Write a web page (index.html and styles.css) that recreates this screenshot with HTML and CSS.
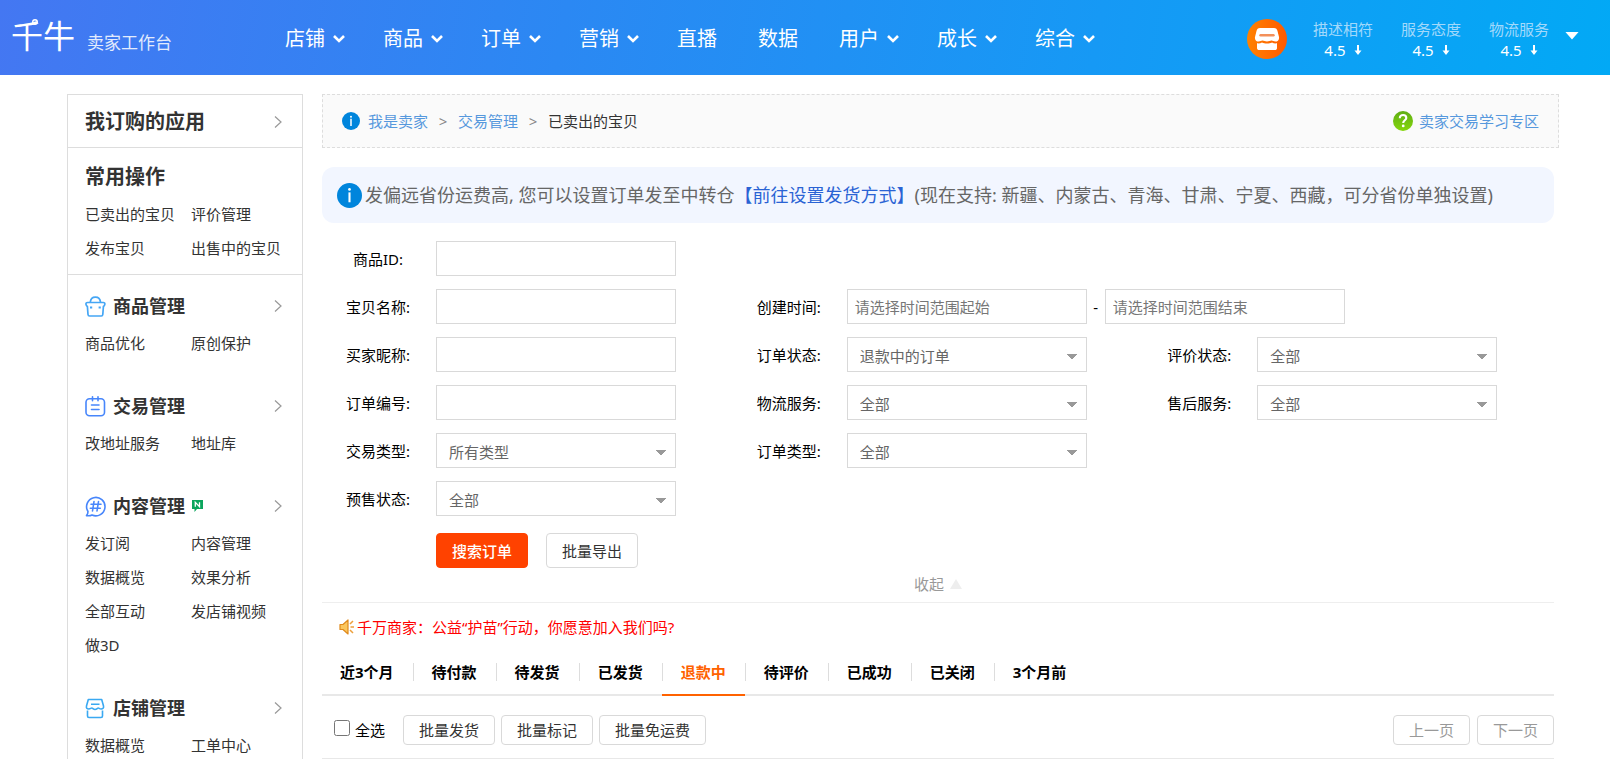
FILE: index.html
```html
<!DOCTYPE html>
<html lang="zh-CN">
<head>
<meta charset="utf-8">
<title>已卖出的宝贝</title>
<link rel="stylesheet" href="styles.css">
</head>
<body>
<svg class="defs" aria-hidden="true">
  <symbol id="chev-down" viewBox="0 0 12 10"><path d="M1 2l5 5 5-5" fill="none" stroke="currentColor" stroke-width="2.600"/></symbol>
  <symbol id="chev-right" viewBox="0 0 8 14"><path d="M1 1.500l6 5.500-6 5.500" fill="none" stroke="currentColor" stroke-width="1.200"/></symbol>
  <symbol id="arrow-down" viewBox="0 0 8 12"><path d="M4 1v8" stroke="currentColor" stroke-width="2"/><path d="M.5 6.500L4 11l3.500-4.500z" fill="currentColor"/></symbol>
  <symbol id="info" viewBox="0 0 24 24"><circle cx="12" cy="12" r="12" fill="#0085dc"/><path d="M12 9v9.500" stroke="#fff" stroke-width="2"/><circle cx="12" cy="6.200" r="1.300" fill="#fff"/></symbol>
</svg>
<header class="top">
  <div class="brand">
    <span class="logo">千牛<svg class="ring" viewBox="0 0 8 8"><circle cx="4" cy="4" r="2.300" fill="none" stroke="#fff" stroke-width="1.400"/></svg></span>
    <span class="brand-sub">卖家工作台</span>
  </div>
  <nav class="nav">
    <a href="#">店铺<svg><use href="#chev-down"/></svg></a>
    <a href="#">商品<svg><use href="#chev-down"/></svg></a>
    <a href="#">订单<svg><use href="#chev-down"/></svg></a>
    <a href="#">营销<svg><use href="#chev-down"/></svg></a>
    <a href="#" class="plain">直播</a>
    <a href="#" class="plain">数据</a>
    <a href="#">用户<svg><use href="#chev-down"/></svg></a>
    <a href="#">成长<svg><use href="#chev-down"/></svg></a>
    <a href="#">综合<svg><use href="#chev-down"/></svg></a>
  </nav>
  <div class="account">
    <svg class="shop" viewBox="0 0 40 40">
      <defs><linearGradient id="og"><stop offset="0" stop-color="#ff8200"/><stop offset="1" stop-color="#ff5a00"/></linearGradient></defs>
      <circle cx="20" cy="20" r="20" fill="url(#og)"/>
      <path d="M13 9h14c2 0 3 1 3.500 3l1.500 6c.5 3-1.500 4.500-3.500 4.500-2 0-2.500-1-4-1s-2.500 1-4.500 1-3-1-4.500-1-2 1-4 1S7.500 21 8 18l1.500-6C10 10 11 9 13 9z" fill="#fff"/>
      <path d="M13.500 16.300h13" stroke="#f3905a" stroke-width="2.400" stroke-linecap="round"/>
      <path d="M10 24.300c2 .4 3.500 0 5-.8 1.500.8 3 1 5 1s3.500-.2 5-1c1.500.8 3 1.200 5 .8V29c0 1.500-1 2-2 2H12c-1 0-2-.5-2-2z" fill="#fff"/>
    </svg>
    <dl class="stat"><dt>描述相符</dt><dd>4.5<svg><use href="#arrow-down"/></svg></dd></dl>
    <dl class="stat"><dt>服务态度</dt><dd>4.5<svg><use href="#arrow-down"/></svg></dd></dl>
    <dl class="stat"><dt>物流服务</dt><dd>4.5<svg><use href="#arrow-down"/></svg></dd></dl>
    <button class="more" type="button" aria-label="更多"></button>
  </div>
</header>

<div class="page">
  <aside class="side">
    <section class="apps"><h2>我订购的应用</h2><svg class="go"><use href="#chev-right"/></svg></section>
    <section class="common">
      <h2>常用操作</h2>
      <div class="links"><a href="#">已卖出的宝贝</a><a href="#">评价管理</a><a href="#">发布宝贝</a><a href="#">出售中的宝贝</a></div>
    </section>
    <div class="groups">
      <section>
        <h3><svg class="ico" viewBox="0 0 21 21" fill="none" stroke="#45a6f5" stroke-width="1.700" stroke-linejoin="round"><path d="M2.500 6.500h15.800c1.200 0 1.700.8 1.500 1.800-.2 1.200-.9 1.800-1.400 2.200l-.6 8c-.1 1-.7 1.500-1.500 1.500H4.500c-.8 0-1.400-.5-1.500-1.500l-.6-8C1.800 10 1.200 9.400 1 8.300c-.2-1 .3-1.800 1.500-1.800z"/><path d="M5.300 6.200C5.600 3 7.700 1.200 10.400 1.200s4.800 1.800 5.100 5"/><path d="M5 11.500h2.200M13.600 11.500h2.200" stroke-width="2.200"/></svg>商品管理<svg class="go"><use href="#chev-right"/></svg></h3>
        <div class="links"><a href="#">商品优化</a><a href="#">原创保护</a></div>
      </section>
      <section>
        <h3><svg class="ico" viewBox="0 0 21 21" fill="none" stroke="#4786fb" stroke-width="1.600" stroke-linecap="round"><rect x="1" y="2.800" width="18.500" height="17" rx="3.500"/><path d="M7.500.8v4M13 .8v4M6.500 9h7.500M6.500 13.500h7.500"/></svg>交易管理<svg class="go"><use href="#chev-right"/></svg></h3>
        <div class="links"><a href="#">改地址服务</a><a href="#">地址库</a></div>
      </section>
      <section>
        <h3><svg class="ico" viewBox="0 0 21 21" fill="none" stroke="#4786fb" stroke-width="1.600" stroke-linecap="round" stroke-linejoin="round"><path d="M3 15.500a9.200 9.200 0 1 1 4 3.500c-1.500.8-3.500.9-5.500.6C2.500 18.500 3 17 3 15.500z"/><path d="M9 5.500L7.500 15M13.500 5.500L12 15M6 8.200h10M5.300 12.300h10"/></svg>内容管理<svg class="new" viewBox="0 0 11 12"><path d="M0 0h11v9H5l-2.500 3V9H0z" fill="#0ba55d"/><path d="M3.300 6.800V2.400l4.200 4.200V2.200" fill="none" stroke="#fff" stroke-width="1.300"/></svg><svg class="go"><use href="#chev-right"/></svg></h3>
        <div class="links"><a href="#">发订阅</a><a href="#">内容管理</a><a href="#">数据概览</a><a href="#">效果分析</a><a href="#">全部互动</a><a href="#">发店铺视频</a><a href="#">做3D</a></div>
      </section>
      <section>
        <h3><svg class="ico" viewBox="0 0 21 21" fill="none" stroke="#3aa9f2" stroke-width="1.600" stroke-linejoin="round"><path d="M3.300 1.500h13.400l1.800 6.500c.5 2-.8 3-2.300 3-1.700 0-2.200-1-3-1s-1.500 1.500-3.200 1.500S7.800 10 6.800 10s-1.300 1-3 1C2 11 1 10 1.500 8z"/><path d="M6 6.200h8.500M2.500 12.500v5.500c0 1 .5 1.500 1.500 1.500h12c1 0 1.500-.5 1.500-1.500v-5.500"/></svg>店铺管理<svg class="go"><use href="#chev-right"/></svg></h3>
        <div class="links"><a href="#">数据概览</a><a href="#">工单中心</a></div>
      </section>
    </div>
  </aside>

  <main class="main">
    <div class="crumbs">
      <svg class="info-sm"><use href="#info"/></svg>
      <a href="#">我是卖家</a><i>&gt;</i><a href="#">交易管理</a><i>&gt;</i><span>已卖出的宝贝</span>
      <a href="#" class="learn"><svg viewBox="0 0 20 20"><defs><linearGradient id="gg" x2="0" y2="1"><stop offset="0" stop-color="#5fae14"/><stop offset="1" stop-color="#85d60c"/></linearGradient></defs><circle cx="10" cy="10" r="10" fill="url(#gg)"/><path d="M6.800 7.200c0-2 1.400-3.200 3.300-3.200s3.200 1.200 3.200 2.900c0 2.300-3.100 2.500-3.100 5" fill="none" stroke="#fff" stroke-width="2.100"/><circle cx="10.200" cy="14.900" r="1.400" fill="#fff"/></svg>卖家交易学习专区</a>
    </div>
    <div class="content">
      <div class="notice"><svg class="info-lg"><use href="#info"/></svg><p>发偏远省份运费高, 您可以设置订单发至中转仓<a href="#">【前往设置发货方式】</a>(现在支持: 新疆、内蒙古、青海、甘肃、宁夏、西藏，可分省份单独设置)</p></div>
      <form class="filter">
        <div class="grid">
          <div class="field full"><label for="f1">商品ID:</label><input id="f1" type="text"></div>
          <div class="field"><label for="f2">宝贝名称:</label><input id="f2" type="text"></div>
          <div class="field range"><label for="f3">创建时间:</label><input id="f3" type="text" placeholder="请选择时间范围起始"><span>-</span><input type="text" aria-label="结束时间" placeholder="请选择时间范围结束"></div>
          <div class="field"><label for="f4">买家昵称:</label><input id="f4" type="text"></div>
          <div class="field"><label for="f5">订单状态:</label><select id="f5"><option>退款中的订单</option></select></div>
          <div class="field"><label for="f6">评价状态:</label><select id="f6"><option>全部</option></select></div>
          <div class="field"><label for="f7">订单编号:</label><input id="f7" type="text"></div>
          <div class="field"><label for="f8">物流服务:</label><select id="f8"><option>全部</option></select></div>
          <div class="field"><label for="f9">售后服务:</label><select id="f9"><option>全部</option></select></div>
          <div class="field"><label for="f10">交易类型:</label><select id="f10"><option>所有类型</option></select></div>
          <div class="field"><label for="f11">订单类型:</label><select id="f11"><option>全部</option></select></div>
          <div class="field full"><label for="f12">预售状态:</label><select id="f12"><option>全部</option></select></div>
        </div>
        <div class="actions"><button type="button" class="btn primary">搜索订单</button><button type="button" class="btn">批量导出</button></div>
        <button type="button" class="fold">收起</button>
      </form>
      <p class="news"><svg viewBox="0 0 16 16"><path d="M1 5.500h3L9 1v14l-5-4.500H1z" fill="#fbc65c" stroke="#e08a1c" stroke-width="1.200" stroke-linejoin="round"/><path d="M11 5l3-3M11.500 8H15M11 11l3 3" stroke="#eda03c" stroke-width="1.500"/></svg><a href="#">千万商家：公益“护苗”行动，你愿意加入我们吗?</a></p>
      <nav class="tabs"><a href="#">近3个月</a><a href="#">待付款</a><a href="#">待发货</a><a href="#">已发货</a><a href="#" class="on">退款中</a><a href="#">待评价</a><a href="#">已成功</a><a href="#">已关闭</a><a href="#">3个月前</a></nav>
      <div class="batch">
        <label class="all"><input type="checkbox"><span>全选</span></label>
        <button type="button" class="btn sm">批量发货</button><button type="button" class="btn sm">批量标记</button><button type="button" class="btn sm">批量免运费</button>
        <div class="pager"><button type="button" class="btn sm">上一页</button><button type="button" class="btn sm">下一页</button></div>
      </div>
    </div>
  </main>
</div>
</body>
</html>
```
FILE: styles.css
```css
* { box-sizing: border-box; margin: 0; padding: 0; }
body {
  display: flex;
  flex-direction: column;
  height: 100vh;
  overflow: hidden;
  background: #fff;
  color: #333;
  font: 15px/20px "Noto Sans", "Noto Sans CJK SC", sans-serif;
}
a { color: inherit; text-decoration: none; }
button, input, select { font: inherit; color: inherit; }
svg { flex: none; }
.defs { display: none; }

/* Top bar */
.top {
  display: flex;
  align-items: center;
  flex: none;
  height: 75px;
  padding: 0 31px 0 11px;
  background: linear-gradient(100deg, #4477f2, #2b88f3 35%, #1699f5 68%, #02a9f5);
  color: #fff;
}
.brand { display: flex; width: 274px; align-items: center; gap: 12px; }
.logo { position: relative; font-size: 32px; line-height: 48px; padding-bottom: 4px; }
.ring { position: absolute; left: 20px; top: 6px; width: 8px; height: 8px; }
.brand-sub { font-size: 17px; padding-top: 10px; opacity: .85; }
.nav { display: flex; gap: 38px; padding-top: 2px; font-size: 20px; line-height: 28px; }
.nav a { display: flex; align-items: center; gap: 8px; }
.nav svg { width: 12px; height: 10px; }
.nav .plain { padding-right: 3px; }
.account { display: flex; align-items: center; margin-left: auto; }
.shop { width: 40px; height: 40px; margin-top: 2px; }
.stat { margin: 4px 0 0 28px; text-align: center; line-height: 21px; }
.shop + .stat { margin-left: 26px; }
.stat dt { color: #a2d9fb; }
.stat dd { display: flex; justify-content: center; align-items: center; gap: 8px; }
.stat svg { width: 8px; height: 12px; }
.more {
  width: 14px;
  height: 8px;
  margin: 0 0 4px 16px;
  border: 0;
  background: #fff;
  clip-path: polygon(0 0, 100% 0, 50% 100%);
}

.page { display: flex; flex: 1; align-items: flex-start; gap: 19px; padding: 19px 51px 0 67px; }

/* Sidebar */
.side { flex: none; width: 236px; border: 1px solid #ddd; }
.side h2 { font-size: 20px; line-height: 40px; }
.apps { display: flex; align-items: center; height: 53px; padding: 2px 20px 0 17px; border-bottom: 1px solid #ddd; }
.common { padding: 9px 0 9px 17px; border-bottom: 1px solid #ddd; }
.go { width: 8px; height: 14px; margin-left: auto; color: #999; }
.links { display: grid; grid-template-columns: 106px 1fr; line-height: 34px; }
.groups { display: flex; flex-direction: column; gap: 26px; padding: 11px 0 20px 17px; }
.side h3 { display: flex; align-items: center; height: 40px; padding-right: 20px; font-size: 18px; }
.ico { width: 21px; height: 21px; margin-right: 7px; }
.new { width: 11px; height: 12px; margin-left: 7px; }

/* Main column */
.main { flex: 1; min-width: 0; }
.crumbs {
  display: flex;
  align-items: center;
  height: 54px;
  padding: 0 19px;
  border: 1px dashed #ddd;
  background: #fafafa;
}
.crumbs a { color: #5698dd; }
.crumbs i { width: 30px; text-align: center; font-style: normal; color: #888; }
.info-sm { width: 18px; height: 18px; margin-right: 8px; }
.crumbs .learn { display: flex; align-items: center; gap: 6px; margin-left: auto; }
.learn svg { width: 20px; height: 20px; }
.content { margin-right: 5px; }
.notice {
  display: flex;
  align-items: center;
  gap: 3px;
  height: 56px;
  margin: 19px 0 18px;
  padding: 0 15px;
  border-radius: 12px;
  background: #f2f6ff;
  color: #666;
  font-size: 18px;
}
.notice a { color: #2a63d4; }
.info-lg { width: 25px; height: 25px; }

/* Filter form */
.filter { border-bottom: 1px solid #eee; }
.grid { display: grid; grid-template-columns: repeat(3, 1fr); row-gap: 13px; }
.field { display: flex; align-items: center; }
.full { grid-column: 1 / -1; }
.range { grid-column: span 2; }
.field label { width: 114px; padding-right: 2px; text-align: center; color: #000; }
.field input, .field select {
  width: 240px;
  height: 35px;
  padding: 0 7px;
  border: 1px solid #d9d9d9;
  border-radius: 0;
  background: #fff;
  color: #666;
}
.field input::placeholder { color: #777; }
.field span { width: 18px; text-align: center; color: #000; }
.field select {
  appearance: none;
  padding: 2px 12px 0;
  background: linear-gradient(to bottom right, #999 50%, transparent 50%) no-repeat right 9px top 16px / 5px 6px, linear-gradient(to bottom left, #999 50%, transparent 50%) no-repeat right 14px top 16px / 5px 6px, #fff;
}
.actions { display: flex; gap: 18px; padding: 17px 0 0 114px; }
.btn {
  height: 35px;
  padding: 0 15px;
  border: 1px solid #d9d9d9;
  border-radius: 4px;
  background: #fff;
  color: #333;
}
.primary { border-color: #ff4200; background: #ff4200; color: #fff; font-weight: 500; }
.fold {
  display: flex;
  align-items: center;
  gap: 6px;
  margin: 6px auto 8px;
  border: 0;
  background: none;
  color: #999;
}
.fold::after { content: ""; width: 12px; height: 10px; background: #eee; clip-path: polygon(50% 0, 100% 100%, 0 100%); }

.news { display: flex; align-items: center; gap: 2px; padding: 14px 0 0 17px; color: #f00; }
.news svg { width: 16px; height: 16px; }

.tabs { display: flex; margin-top: 17px; border-bottom: 2px solid #e8e8e8; color: #000; font-weight: 700; }
.tabs a { position: relative; padding: 8px 19px 12px 18px; margin-bottom: -2px; border-bottom: 2px solid transparent; }
.tabs a + a { padding-left: 19px; }
.tabs a + a::before { content: ""; position: absolute; left: 0; top: 9px; width: 1px; height: 18px; background: #ddd; }
.tabs .on { border-color: #ff6200; color: #ff6200; }

.batch { display: flex; align-items: center; gap: 6px; padding: 19px 0 13px 12px; border-bottom: 1px solid #e8e8e8; }
.all { display: flex; gap: 5px; margin-right: 12px; color: #000; }
.all input { width: 16px; height: 16px; }
.sm { height: 30px; }
.pager { display: flex; gap: 7px; margin-left: auto; }
.pager .btn { color: #999; }
```
